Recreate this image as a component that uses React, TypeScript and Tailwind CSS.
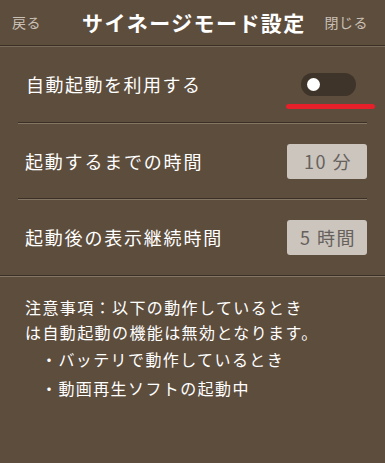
import React, { useState } from 'react'

// サイネージモード設定パネル
const font = { fontFamily: '"Noto Sans CJK JP", "Noto Sans", sans-serif' }

const ValueBox = ({ children }: { children: React.ReactNode }) => (
  <div className="flex h-[35px] w-[80px] items-center justify-center rounded-[3px] bg-[#cbc5be] pl-[2px] text-[18px] tracking-[1.5px] text-[#66615c]">
    {children}
  </div>
)

export default function App() {
  const [autoStart, setAutoStart] = useState(false)

  return (
    <div className="h-[463px] w-[385px] overflow-hidden bg-[#5d4d3d] text-white" style={font}>
      {/* ヘッダー */}
      <div className="flex h-[46px] items-center border-b border-[#3b3026] pl-[12px] pr-[17px]">
        <span className="text-[14px] tracking-[0.5px] text-[#c9c0b6]">戻る</span>
        <span className="ml-[41px] text-[21px] font-bold tracking-[1.4px]">サイネージモード設定</span>
        <span className="ml-auto text-[14px] tracking-[0.5px] text-[#c9c0b6]">閉じる</span>
      </div>
      <div className="h-px bg-[#7a6a5a]" />

      <div className="px-[18px]">
        {/* 自動起動 */}
        <div className="flex h-[75px] items-center justify-between pl-[8px]">
          <span className="text-[18px] tracking-[1.5px]">自動起動を利用する</span>
          <div className="relative mr-[-8px] flex w-[89px] justify-center">
            <button
              onClick={() => setAutoStart(!autoStart)}
              className="relative ml-[-4px] mt-[-1px] h-[23px] w-[55px] rounded-full bg-[#3f3429]"
            >
              <span
                className={`absolute top-[5px] h-[13px] w-[13px] rounded-full bg-white ${autoStart ? 'left-[36px]' : 'left-[6px]'}`}
              />
            </button>
            <span className="absolute left-0 top-[30px] h-[5px] w-[89px] rounded-full bg-[#e5202a]" />
          </div>
        </div>
        <div className="h-px bg-[#3b3026]" />
        <div className="h-px bg-[#857565]" />

        {/* 起動するまでの時間 */}
        <div className="flex h-[74px] items-center justify-between pl-[7px]">
          <span className="text-[18px] tracking-[1.8px]">起動するまでの時間</span>
          <ValueBox>10 分</ValueBox>
        </div>
        <div className="h-px bg-[#3b3026]" />
        <div className="h-px bg-[#857565]" />

        {/* 表示継続時間 */}
        <div className="flex h-[75px] items-center justify-between pl-[7px]">
          <span className="text-[18px] tracking-[1.8px]">起動後の表示継続時間</span>
          <ValueBox>5 時間</ValueBox>
        </div>
      </div>
      <div className="h-px bg-[#3b3026]" />
      <div className="h-px bg-[#857565]" />

      {/* 注意事項 */}
      <div className="px-[25px] pt-[18px] text-[16px] leading-[25px] tracking-[1.4px]">
        <p>注意事項：以下の動作しているとき</p>
        <p>は自動起動の機能は無効となります。</p>
        <ul className="pl-[16px]">
          <li className="leading-[29px]">・バッテリで動作しているとき</li>
          <li className="leading-[29px]">・動画再生ソフトの起動中</li>
        </ul>
      </div>
    </div>
  )
}
